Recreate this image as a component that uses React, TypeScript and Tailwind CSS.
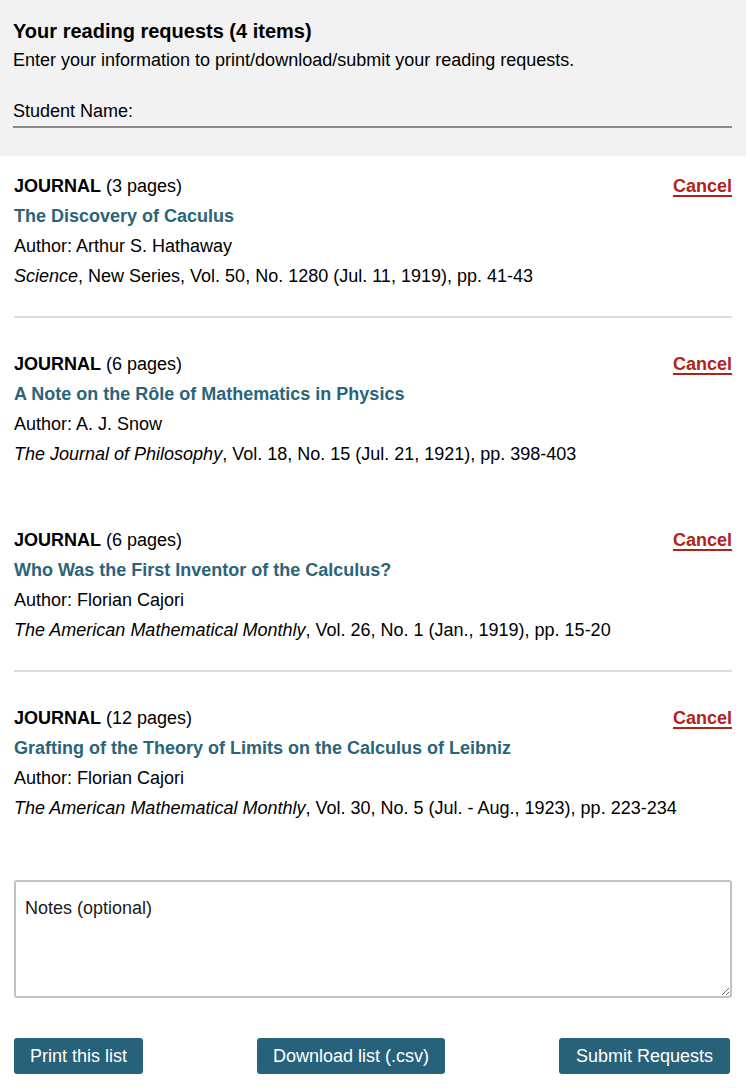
const items = [
  {
    pages: 3,
    title: "The Discovery of Caculus",
    author: "Arthur S. Hathaway",
    journal: "Science",
    rest: ", New Series, Vol. 50, No. 1280 (Jul. 11, 1919), pp. 41-43",
    top: "pt-[15px]",
    divider: "border-[#dddddd]",
  },
  {
    pages: 6,
    title: "A Note on the Rôle of Mathematics in Physics",
    author: "A. J. Snow",
    journal: "The Journal of Philosophy",
    rest: ", Vol. 18, No. 15 (Jul. 21, 1921), pp. 398-403",
    top: "pt-[31px]",
    divider: "border-transparent",
  },
  {
    pages: 6,
    title: "Who Was the First Inventor of the Calculus?",
    author: "Florian Cajori",
    journal: "The American Mathematical Monthly",
    rest: ", Vol. 26, No. 1 (Jan., 1919), pp. 15-20",
    top: "pt-[29px]",
    divider: "border-[#dddddd]",
  },
  {
    pages: 12,
    title: "Grafting of the Theory of Limits on the Calculus of Leibniz",
    author: "Florian Cajori",
    journal: "The American Mathematical Monthly",
    rest: ", Vol. 30, No. 5 (Jul. - Aug., 1923), pp. 223-234",
    top: "pt-[31px]",
    divider: "border-transparent",
  },
];

function Item({ item }: { item: (typeof items)[number] }) {
  return (
    <div className={`${item.top} pb-[25px] border-b-2 ${item.divider}`}>
      <div className="flex justify-between leading-[30px]">
        <div>
          <span className="font-bold">JOURNAL</span> ({item.pages} pages)
        </div>
        <a href="#" className="font-bold text-[#b1221c] underline decoration-2 underline-offset-[3px]">
          Cancel
        </a>
      </div>
      <div className="leading-[30px] font-bold text-[#2a6479]">{item.title}</div>
      <div className="leading-[30px]">Author: {item.author}</div>
      <div className="leading-[30px]">
        <i>{item.journal}</i>
        {item.rest}
      </div>
    </div>
  );
}

export default function App() {
  return (
    <div className="w-[746px] min-h-[1088px] bg-white text-[18px] text-black font-['Liberation_Sans',Arial,sans-serif]">
      <div className="bg-[#f2f2f2] px-[13px] pt-[16px] pb-[28px]">
        <h1 className="text-[20px] font-bold leading-[30px]">Your reading requests (4 items)</h1>
        <p className="leading-[28px]">Enter your information to print/download/submit your reading requests.</p>
        <label className="mt-[24px] flex items-end h-[30px] border-b-2 border-[#8a8a8a] mr-[1px] pb-[3px]">
          <span className="leading-[24px]">Student Name:</span>
          <input className="flex-1 h-[24px] bg-transparent outline-none pl-2" />
        </label>
      </div>

      <div className="px-[14px]">
        {items.map((item) => (
          <Item key={item.title} item={item} />
        ))}

        <textarea
          placeholder="Notes (optional)"
          className="mt-[30px] block w-full h-[118px] border-2 border-[#c2c2c2] rounded-[3px] px-[9px] pt-[14px] pb-[14px] leading-[24px] placeholder:text-[#1a1a1a] resize-y"
        />

        <div className="mt-[40px] flex justify-between pb-[15px]">
          <button className="h-[36px] px-[16px] rounded-[3px] bg-[#28627a] text-white">Print this list</button>
          <button className="h-[36px] px-[16px] rounded-[3px] bg-[#28627a] text-white">Download list (.csv)</button>
          <button className="h-[36px] px-[17px] mr-[2px] rounded-[3px] bg-[#28627a] text-white">Submit Requests</button>
        </div>
      </div>
    </div>
  );
}
